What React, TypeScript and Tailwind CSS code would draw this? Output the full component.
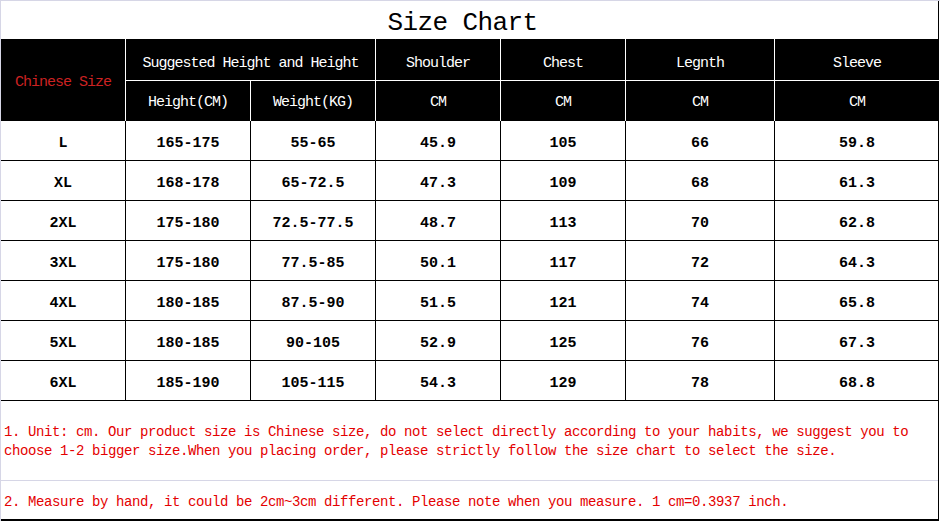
import React from "react";

const rows = [
  ["L", "165-175", "55-65", "45.9", "105", "66", "59.8"],
  ["XL", "168-178", "65-72.5", "47.3", "109", "68", "61.3"],
  ["2XL", "175-180", "72.5-77.5", "48.7", "113", "70", "62.8"],
  ["3XL", "175-180", "77.5-85", "50.1", "117", "72", "64.3"],
  ["4XL", "180-185", "87.5-90", "51.5", "121", "74", "65.8"],
  ["5XL", "180-185", "90-105", "52.9", "125", "76", "67.3"],
  ["6XL", "185-190", "105-115", "54.3", "129", "78", "68.8"],
];

const cols = "grid grid-cols-[125px_125px_125px_125px_125px_149px_164px]";

export default function App() {
  return (
    <div
      className="w-[940px] h-[521px] bg-white overflow-hidden"
      style={{ fontFamily: '"Liberation Mono", monospace' }}
    >
      <div className="border-t border-l border-[#d6d6e6] w-[940px] h-[521px] flex flex-col">
        <div className="w-[938px] border-r border-black flex flex-col">
          {/* title */}
          <div className="h-[38px] flex items-end justify-center pb-[3px] pr-[14px] text-[26px] tracking-[-0.6px] text-black leading-none">
            Size Chart
          </div>
          {/* header */}
          <div className="bg-black text-white">
            <div className={`${cols} h-[82px]`}>
              <div className="row-span-2 flex items-center justify-center pt-[7px] text-[#cc2222] text-[15px] tracking-[-1px] border-r border-white">
                Chinese Size
              </div>
              <div className="col-span-2 h-[42px] flex items-center justify-center pt-[9px] text-[15px] tracking-[-1px] border-r border-b border-white">
                Suggested Height and Height
              </div>
              {["Shoulder", "Chest", "Legnth", "Sleeve"].map((t, i) => (
                <div
                  key={t}
                  className={`h-[42px] flex items-center justify-center pt-[9px] text-[15px] tracking-[-1px] border-b border-white ${i < 3 ? "border-r" : ""}`}
                >
                  {t}
                </div>
              ))}
              {["Height(CM)", "Weight(KG)", "CM", "CM", "CM", "CM"].map((t, i) => (
                <div
                  key={i}
                  className={`h-[40px] flex items-center justify-center pt-[4px] text-[15px] tracking-[-1px] ${i < 5 ? "border-r border-white" : ""}`}
                >
                  {t}
                </div>
              ))}
            </div>
          </div>
          {/* body */}
          {rows.map((r, ri) => (
            <div key={ri} className={`${cols} h-[40px] border-b border-black`}>
              {r.map((c, ci) => (
                <div
                  key={ci}
                  className={`flex items-center justify-center pt-[8px] text-[15px] font-bold text-black ${ci < 6 ? "border-r border-black" : ""}`}
                >
                  {c}
                </div>
              ))}
            </div>
          ))}
          {/* notes */}
          <div className="h-[80px] border-b border-[#d6d6e6] flex flex-col justify-center pl-[3px] pt-[2px] text-[#e40000] text-[14px] tracking-[-0.4px] leading-[19px] whitespace-nowrap">
            <div>1. Unit: cm. Our product size is Chinese size, do not select directly according to your habits, we suggest you to</div>
            <div>choose 1-2 bigger size.When you placing order, please strictly follow the size chart to select the size.</div>
          </div>
          <div className="h-[40px] flex items-center pl-[3px] pt-[4px] text-[#e40000] text-[14px] tracking-[-0.4px] whitespace-nowrap border-b-2 border-black">
            2. Measure by hand, it could be 2cm~3cm different. Please note when you measure. 1 cm=0.3937 inch.
          </div>
        </div>
      </div>
    </div>
  );
}
